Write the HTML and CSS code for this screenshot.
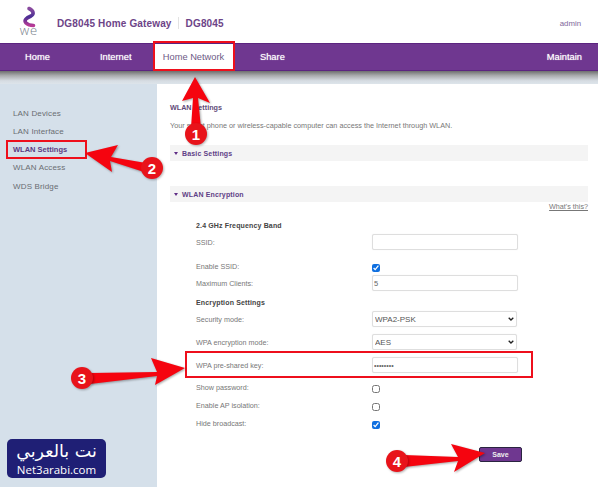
FILE: index.html
```html
<!DOCTYPE html>
<html lang="en">
<head>
<meta charset="utf-8">
<title>DG8045 Home Gateway</title>
<link rel="stylesheet" href="styles.css">
</head>
<body>
<div class="page">
  <header class="top">
    <svg class="logo" viewBox="0 0 24 32" width="24" height="32" aria-label="WE logo">
      <defs>
        <linearGradient id="sq" x1="0" y1="0" x2="0" y2="1">
          <stop offset="0" stop-color="#8a4a9e"/>
          <stop offset="0.5" stop-color="#4a2f95"/>
          <stop offset="1" stop-color="#b83a96"/>
        </linearGradient>
      </defs>
      <path class="squiggle" d="M12 1.500C16.500 3.500 17.500 7 14 9C9.500 11 6.500 13 9 16C11 18 14 18.500 16.500 18.500" stroke="url(#sq)"/>
      <text x="12" y="28" text-anchor="middle" class="logo-we">we</text>
    </svg>
    <div class="brand">DG8045 Home Gateway</div>
    <div class="brand-sep"></div>
    <div class="brand">DG8045</div>
    <div class="user">admin</div>
  </header>

  <nav class="nav">
    <a class="nav-item nav-home">Home</a>
    <a class="nav-item nav-internet">Internet</a>
    <a class="nav-item nav-active">Home Network</a>
    <a class="nav-item nav-share">Share</a>
    <a class="nav-item nav-last">Maintain</a>
  </nav>
  <div class="nav-shadow"></div>

  <div class="body">
    <aside class="side">
      <a class="side-item">LAN Devices</a>
      <a class="side-item">LAN Interface</a>
      <a class="side-item side-active">WLAN Settings</a>
      <a class="side-item">WLAN Access</a>
      <a class="side-item">WDS Bridge</a>
    </aside>
    <main class="main">
      <h1 class="title">WLAN Settings</h1>
      <p class="desc">Your smart phone or wireless-capable computer can access the Internet through WLAN.</p>
      <div class="section"><span class="caret"></span>Basic Settings</div>
      <div class="section section-second"><span class="caret"></span>WLAN Encryption</div>
      <a class="whats">What's this?</a>
      <form class="form">
        <div class="row row-head">2.4 GHz Frequency Band</div>
        <div class="row row-field"><label class="lbl">SSID:</label><input class="field" type="text"></div>
        <div class="row row-check row-gap"><label class="lbl">Enable SSID:</label><input class="chk" type="checkbox" checked></div>
        <div class="row row-field row-gap1"><label class="lbl">Maximum Clients:</label><input class="field" type="text" value="5"></div>
        <div class="row row-head row-head-second">Encryption Settings</div>
        <div class="row row-field"><label class="lbl">Security mode:</label><select class="field sel"><option>WPA2-PSK</option></select></div>
        <div class="row row-field row-gap2"><label class="lbl">WPA encryption mode:</label><select class="field sel"><option>AES</option></select></div>
        <div class="row row-field row-gap2"><label class="lbl">WPA pre-shared key:</label><input class="field pw" type="password" value="12345678"></div>
        <div class="row row-tall row-gap3"><label class="lbl">Show password:</label><input class="chk" type="checkbox"></div>
        <div class="row row-tall"><label class="lbl">Enable AP isolation:</label><input class="chk" type="checkbox"></div>
        <div class="row row-tall"><label class="lbl">Hide broadcast:</label><input class="chk" type="checkbox" checked></div>
        <div class="actions"><button class="save" type="button">Save</button></div>
      </form>
    </main>
  </div>
</div>

<div class="badge">
  <div class="badge-ar" lang="ar" dir="rtl">نت بالعربي</div>
  <div class="badge-en">Net3arabi.com</div>
</div>

<svg class="marks" viewBox="0 0 600 487" width="600" height="487">
  <g class="boxes">
    <rect x="154" y="42" width="80" height="28"/>
    <rect x="7" y="141" width="79" height="17"/>
    <rect x="186" y="352" width="346" height="25"/>
  </g>
  <g class="arrows">
    <path d="M195 77L210 103L198 98L201 128H191L193 98L182 101Z"/>
    <path d="M85 153L118 145L111 157L146 163L144 172L110 161L112 172Z"/>
    <path d="M185 368L151 358L157 372L90 373L90 384L157 376L155 385Z"/>
    <path d="M485 453L451 444L458 457L404 455L404 467L458 461L454 472Z"/>
  </g>
  <g class="dots">
    <circle cx="196" cy="134" r="11"/>
    <circle cx="152" cy="168" r="11"/>
    <circle cx="82" cy="378" r="11"/>
    <circle cx="397" cy="461" r="11"/>
  </g>
  <g class="nums">
    <text x="196" y="139.500">1</text>
    <text x="152" y="173.500">2</text>
    <text x="82" y="383.500">3</text>
    <text x="397" y="466.500">4</text>
  </g>
</svg>
</body>
</html>
```
FILE: styles.css
```css
* { box-sizing: border-box; }
html, body { margin: 0; padding: 0; }
body {
  width: 600px;
  height: 487px;
  overflow: hidden;
  background: #fff;
  font-family: "Liberation Sans", Arial, sans-serif;
  position: relative;
}
.page { display: flex; flex-direction: column; width: 600px; height: 487px; }

/* header */
.top { height: 43px; display: flex; align-items: center; padding: 3px 19px 0 17px; flex: none; }
.logo { margin-right: 16px; flex: none; overflow: visible; }
.squiggle { fill: none; stroke-width: 3.600; stroke-linecap: round; }
.logo-we { font: 300 13px "Open Sans", sans-serif; fill: #77808a; letter-spacing: 1px; }
.brand { font-size: 10px; font-weight: bold; color: #6d4488; letter-spacing: 0.150px; }
.brand-sep { width: 1px; height: 12px; background: #e2e2e2; margin: 0 6.500px; }
.user { margin-left: auto; font-size: 7.800px; color: #80689a; }

/* nav */
.nav {
  width: 598px;
  height: 28px;
  flex: none;
  display: flex;
  background: #6f3790;
  border-top: 1px solid #5c2480;
  border-bottom: 1px solid #5c2480;
}
.nav-item { display: flex; align-items: center; font-size: 9.300px; color: #fff; text-shadow: 0 0 1px rgba(255,255,255,0.8); }
.nav-home { margin-left: 25px; width: 75px; }
.nav-internet { width: 53px; }
.nav-active { width: 81px; justify-content: center; background: #fff; color: #6d5a86; text-shadow: none; }
.nav-share { margin-left: 26px; }
.nav-last { margin-left: auto; margin-right: 16px; }
.nav-shadow {
  width: 598px;
  height: 13px;
  flex: none;
  background: linear-gradient(#6e6e6e 0, #a9abad 35%, #d6dce2 75%, #dde4ea 100%);
}

/* body */
.body { flex: 1; display: flex; min-height: 0; }
.side {
  width: 157px;
  flex: none;
  background: #d5e0ea;
  padding-top: 20px;
  display: flex;
  flex-direction: column;
}
.side-item {
  height: 18.250px;
  display: flex;
  align-items: center;
  padding-left: 13px;
  font-size: 8px;
  letter-spacing: 0.150px;
  color: #6a6d72;
}
.side-active { color: #5c3a82; font-size: 7.500px; font-weight: bold; letter-spacing: 0; }

.main { flex: 1; padding: 19px 12px 0 13px; background: #fff; display: flex; flex-direction: column; }
.title { margin: 0; height: 10px; line-height: 10px; font-size: 7.200px; font-weight: bold; color: #5f4a78; }
.desc { margin: 8px 0 0; height: 10px; line-height: 10px; font-size: 7.250px; color: #777; white-space: nowrap; }
.section {
  margin-top: 14px;
  height: 16px;
  flex: none;
  display: flex;
  align-items: center;
  padding-left: 4px;
  background: #f4f4f4;
  font-size: 7px;
  font-weight: bold;
  color: #5f3f86;
  letter-spacing: 0.150px;
}
.section-second { margin-top: 25px; }
.caret {
  width: 0;
  height: 0;
  margin-right: 4px;
  border-left: 2.500px solid transparent;
  border-right: 2.500px solid transparent;
  border-top: 3.500px solid #5f2d86;
}
.whats { align-self: flex-end; height: 10px; line-height: 10px; font-size: 7.200px; color: #777; text-decoration: underline; }
.form { margin-top: 4px; padding-left: 26px; display: flex; flex-direction: column; }
.row { display: flex; align-items: center; flex: none; }
.row-head { height: 18px; font-size: 7px; font-weight: bold; color: #444; letter-spacing: 0.150px; }
.row-head-second { margin-top: 2px; }
.row-field, .row-check { height: 16px; }
.row-gap { margin-top: 8px; }
.row-gap1 { margin-top: 1px; }
.row-gap2 { margin-top: 7px; }
.row-gap3 { margin-top: 5px; }
.row-tall { height: 18px; }
.lbl { width: 176px; flex: none; font-size: 7.200px; color: #777; }
.field {
  width: 146px;
  height: 16px;
  padding: 0 1px;
  margin: 0;
  border: 1px solid #dedede;
  border-radius: 2px;
  background: #fff;
  font: 7.500px "Liberation Sans", Arial, sans-serif;
  color: #666;
  outline: 0;
  box-shadow: 0 0 1px #e4e4e4;
}
.sel {
  width: 145px;
  padding-left: 2px;
  color: #555;
  font-size: 8px;
  appearance: none;
  -webkit-appearance: none;
  background-image: url("data:image/svg+xml,%3Csvg xmlns='http://www.w3.org/2000/svg' width='6' height='4'%3E%3Cpath d='M.7.7L3 3l2.300-2.300' fill='none' stroke='%23222' stroke-width='1.300'/%3E%3C/svg%3E");
  background-repeat: no-repeat;
  background-position: right 2px center;
}
.pw { font-size: 7px; }
.chk { width: 8px; height: 8px; margin: 4px 0 0; accent-color: #0f6fe0; flex: none; }
.actions { display: flex; margin-top: 15px; padding-left: 283px; }
.save {
  width: 43px;
  height: 15px;
  padding: 0;
  border: 1px solid #2a2440;
  border-radius: 2px;
  background: #6f3790;
  color: #eee;
  font: bold 7px "Liberation Sans", Arial, sans-serif;
}

/* watermark */
.badge {
  position: absolute;
  left: 7px;
  top: 439px;
  width: 99px;
  height: 39px;
  border-radius: 5px;
  background: #1f1f75;
  color: #fff;
  display: flex;
  flex-direction: column;
  align-items: center;
}
.badge-ar { height: 24px; font: 17.500px/24px "DejaVu Sans", sans-serif; white-space: nowrap; }
.badge-en { height: 15px; line-height: 13px; font-family: "Open Sans", sans-serif; font-size: 11.500px; white-space: nowrap; }

/* annotations */
.marks { position: absolute; left: 0; top: 0; pointer-events: none; }
.boxes rect { fill: none; stroke: #ee0f1c; stroke-width: 2; }
.arrows path { fill: #f5040f; filter: drop-shadow(1px 1px 1px rgba(0,0,0,0.35)); }
.dots circle { fill: #e8131a; filter: drop-shadow(1px 1px 1px rgba(0,0,0,0.3)); }
.nums text { fill: #fff; font: bold 15px "Liberation Sans", Arial, sans-serif; text-anchor: middle; }
```
